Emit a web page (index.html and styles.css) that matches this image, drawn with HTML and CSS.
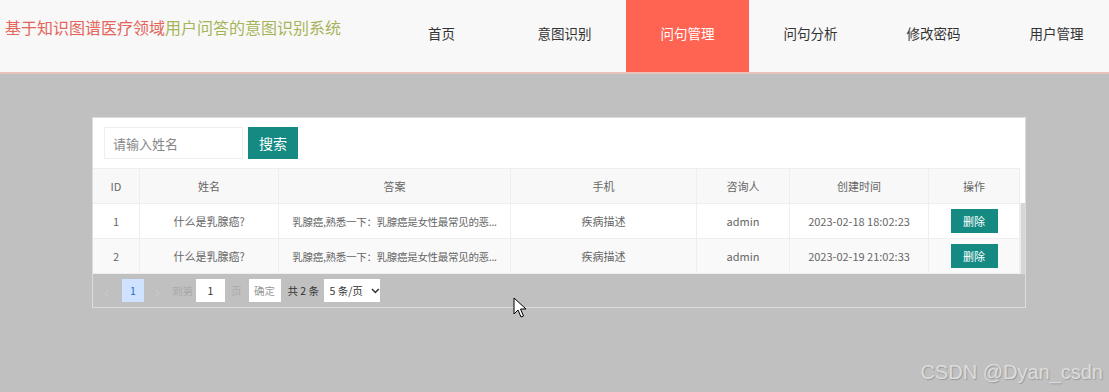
FILE: index.html
```html
<!DOCTYPE html>
<html lang="zh-CN">
<head>
    <meta charset="utf-8">
    <title>问句管理</title>
    <link rel="stylesheet" href="styles.css">
</head>
<body>
    <div class="header">
        <div class="title"><span class="title-red">基于知识图谱医疗领域</span><span class="title-green">用户问答的意图识别系统</span></div>
        <ul class="nav">
            <li>首页</li>
            <li>意图识别</li>
            <li class="active">问句管理</li>
            <li>问句分析</li>
            <li>修改密码</li>
            <li>用户管理</li>
        </ul>
    </div>

    <div class="main">
        <div class="panel">
            <div class="search-bar">
                <input class="search-input" type="text" placeholder="请输入姓名">
                <button class="btn">搜索</button>
            </div>

            <div class="table-wrap">
                <table class="data-table">
                    <thead>
                        <tr>
                            <th class="col-id">ID</th>
                            <th class="col-name">姓名</th>
                            <th class="col-answer">答案</th>
                            <th class="col-phone">手机</th>
                            <th class="col-user">咨询人</th>
                            <th class="col-time">创建时间</th>
                            <th>操作</th>
                        </tr>
                    </thead>
                    <tbody>
                        <tr>
                            <td>1</td>
                            <td>什么是乳腺癌?</td>
                            <td class="cell-answer">乳腺癌,熟悉一下：乳腺癌是女性最常见的恶...</td>
                            <td>疾病描述</td>
                            <td>admin</td>
                            <td>2023-02-18 18:02:23</td>
                            <td><button class="btn btn-small">删除</button></td>
                        </tr>
                        <tr>
                            <td>2</td>
                            <td>什么是乳腺癌?</td>
                            <td class="cell-answer">乳腺癌,熟悉一下：乳腺癌是女性最常见的恶...</td>
                            <td>疾病描述</td>
                            <td>admin</td>
                            <td>2023-02-19 21:02:33</td>
                            <td><button class="btn btn-small">删除</button></td>
                        </tr>
                    </tbody>
                </table>
                <div class="scrollbar"></div>
            </div>

            <div class="pager">
                <span class="pager-arrow">&lsaquo;</span>
                <span class="pager-num">1</span>
                <span class="pager-arrow">&rsaquo;</span>
                <span class="pager-goto">到第</span>
                <span class="pager-box">1</span>
                <span class="pager-page">页</span>
                <span class="pager-ok">确定</span>
                <span class="pager-total">共 2 条</span>
                <span class="pager-select">5 条/页
                    <svg width="9" height="6" viewBox="0 0 9 6"><path d="M1 1 L4.5 4.5 L8 1" fill="none" stroke="#333" stroke-width="1.6"/></svg>
                </span>
            </div>
        </div>
    </div>

    <svg class="cursor" width="14" height="22" viewBox="0 0 14 22">
        <path d="M1 1 L1 17 L5 13 L8 20 L10.5 19 L7.5 12 L13 12 Z" fill="#fff" stroke="#000" stroke-width="1"/>
    </svg>

    <div class="watermark">CSDN @Dyan_csdn</div>
</body>
</html>
```

FILE: styles.css
```css
body {
    margin: 0;
    width: 1109px;
    height: 392px;
    overflow: hidden;
    background: #c0c0c0;
    font-family: "Noto Sans CJK SC", "Noto Sans", sans-serif;
    position: relative;
}

.header {
    display: flex;
    height: 72px;
    background: #f8f8f8;
    border-bottom: 2px solid #e9c2ba;
    overflow: hidden;
}

.title {
    flex-shrink: 0;
    width: 375px;
    padding: 15px 0 0 5px;
    font-size: 16px;
    line-height: 24px;
    white-space: nowrap;
}

.title-red {
    color: #e4655b;
}

.title-green {
    color: #a6b458;
}

.nav {
    display: flex;
    flex-shrink: 0;
    margin: 0;
    padding: 0;
    list-style: none;
}

.nav li {
    width: 123px;
    flex-shrink: 0;
    text-align: center;
    font-size: 13.5px;
    line-height: 66px;
    color: #333;
}

.nav li.active {
    background: #ff6352;
    color: #fff;
}

.main {
    padding: 43px 0 0 92px;
}

.panel {
    width: 932px;
    border: 1px solid #dcdcdc;
    background: #c0c0c0;
}

.search-bar {
    display: flex;
    gap: 5px;
    padding: 9px 11px 9px;
    background: #fff;
}

.search-input {
    width: 139px;
    height: 32px;
    box-sizing: border-box;
    border: 1px solid #eee;
    padding: 0 8px;
    font-family: inherit;
    font-size: 13px;
    color: #333;
}

.search-input::placeholder {
    color: #888;
}

.btn {
    background: #148a83;
    color: #fff;
    border: none;
    font-family: inherit;
    font-size: 14px;
    width: 50px;
    height: 32px;
    padding: 0;
}

.table-wrap {
    display: flex;
    background: #fff;
}

.data-table {
    border-collapse: collapse;
    width: 927px;
    table-layout: fixed;
    font-size: 11px;
    color: #666;
}

.data-table th,
.data-table td {
    height: 34px;
    padding: 0;
    text-align: center;
    font-weight: normal;
    border: 1px solid #eee;
    white-space: nowrap;
}

.data-table th {
    background: #f8f8f8;
}

.data-table tbody tr:nth-child(2) td {
    background: #f9f9f9;
}

.data-table th:first-child,
.data-table td:first-child {
    border-left: none;
}

.data-table td.cell-answer {
    font-size: 10.5px;
    letter-spacing: -0.3px;
}

.col-id { width: 46px; }
.col-name { width: 138px; }
.col-answer { width: 231px; }
.col-phone { width: 185px; }
.col-user { width: 92px; }
.col-time { width: 138px; }

.btn-small {
    width: 47px;
    height: 24px;
    font-size: 11px;
    vertical-align: middle;
}

.scrollbar {
    width: 4px;
    margin-top: 35px;
    background: #d6d6d6;
    border-left: 1px solid #ececec;
}

.pager {
    display: flex;
    align-items: center;
    height: 33px;
    padding-left: 4px;
    font-size: 10.5px;
    color: #aaa;
    white-space: nowrap;
}

.pager-arrow {
    width: 20px;
    text-align: center;
    font-size: 20px;
    color: #c9c9c9;
    line-height: 20px;
}

.pager-num {
    width: 22px;
    height: 23px;
    margin: 0 0 0 5px;
    background: #cfe2ff;
    color: #2b6bd6;
    text-align: center;
    line-height: 23px;
}

.pager-num + .pager-arrow {
    margin-left: 3px;
}

.pager-goto {
    width: 22px;
    margin: 0 2px 0 5px;
}

.pager-box {
    width: 29px;
    height: 23px;
    background: #fff;
    color: #333;
    text-align: center;
    line-height: 23px;
}

.pager-page {
    margin: 0 7px 0 6px;
}

.pager-ok {
    width: 32px;
    height: 23px;
    background: #fff;
    color: #999;
    text-align: center;
    line-height: 23px;
}

.pager-total {
    width: 30px;
    margin: 0 6px 0 7px;
    color: #333;
}

.pager-select {
    display: flex;
    align-items: center;
    gap: 8px;
    width: 56px;
    height: 23px;
    box-sizing: border-box;
    padding-left: 6px;
    background: #fff;
    color: #333;
}

.cursor {
    position: absolute;
    left: 513px;
    top: 297px;
}

.watermark {
    position: absolute;
    right: 6px;
    top: 360px;
    font-family: "Liberation Sans", Arial, sans-serif;
    font-size: 20px;
    line-height: 24px;
    color: #dcdcdc;
    text-shadow: 1px 1px 1px #9a9a9a;
}
```
